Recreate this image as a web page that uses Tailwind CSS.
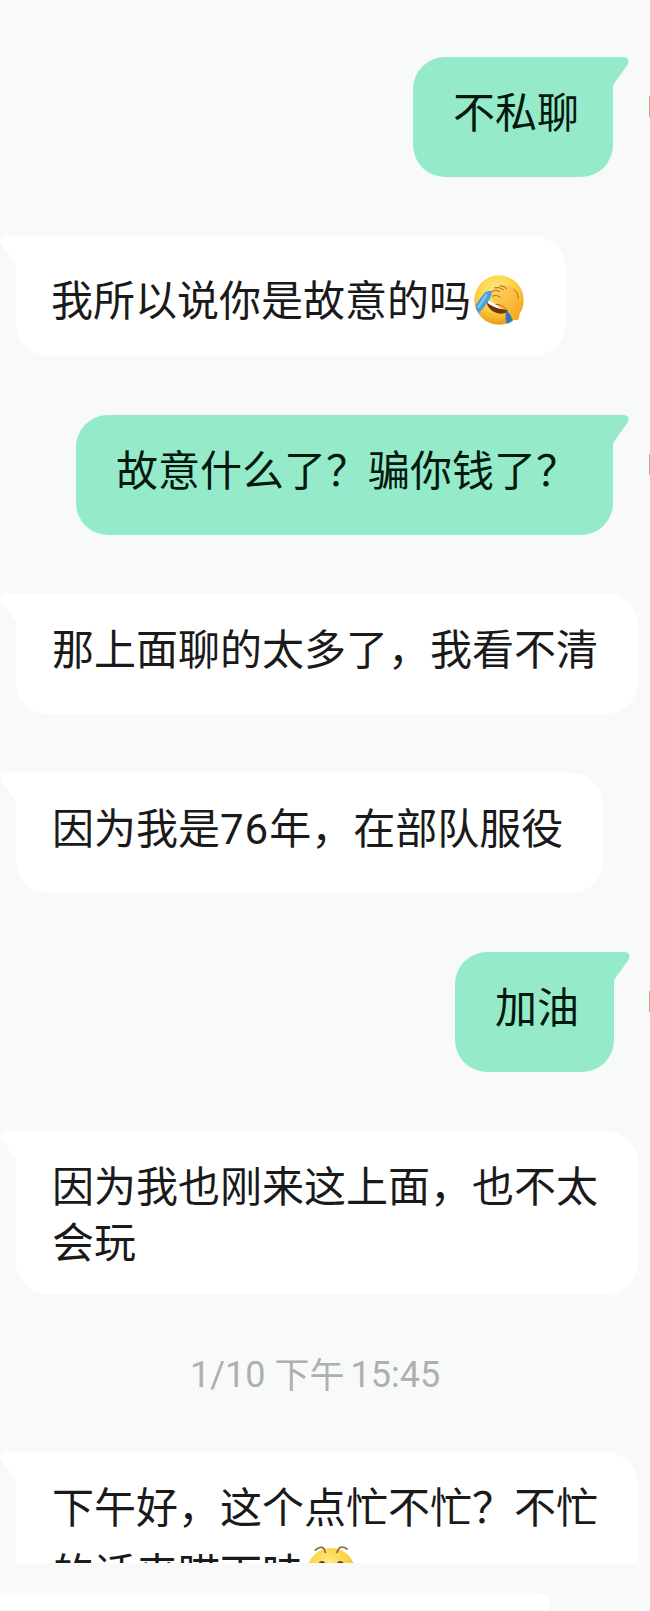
<!DOCTYPE html>
<html lang="zh-CN">
<head>
  <meta charset="UTF-8" />
  <meta name="viewport" content="width=device-width, initial-scale=1" />
  <title>聊天</title>
  <script src="https://cdn.jsdelivr.net/npm/@tailwindcss/browser@4"></script>
</head>
<body class="bg-[#f7faf9] w-[650px] h-[1611px] overflow-hidden text-[42px] leading-[56px] text-[#1a1a1a] font-['Noto_Sans_CJK_SC',sans-serif]">
  <!-- shared bubble tail, mirrored for incoming messages -->
  <svg class="hidden">
    <symbol id="tail" viewBox="0 0 16 30">
      <path d="M0 0H10C15 0 17 3.5 14.4 8L1.5 26Q0 28 0 30Z" fill="currentColor" />
    </symbol>
  </svg>

  <main class="h-[1563px] overflow-hidden flex flex-col pt-[57px] gap-[59px] whitespace-nowrap">
    <div class="relative shrink-0 self-end mr-[37px] w-[200px] h-[120px] pl-10 pt-[25px] bg-[#95ebc9] rounded-[32px] rounded-tr-none text-[#03190f]">
      不私聊
      <svg class="absolute top-0 left-full w-4 h-[30px] text-[#95ebc9]"><use href="#tail" /></svg>
      <span class="absolute top-[39px] -right-[37px] w-px h-[21px] bg-[#d9a47e]"></span>
    </div>

    <div class="relative shrink-0 ml-4 w-[550px] h-[120px] pl-[35px] pt-[5px] bg-white rounded-[32px] rounded-tl-none flex items-center">
      <span class="-mt-px">我所以说你是故意的吗</span>
      <svg class="ml-[3px] mt-[3px] size-[50px]" viewBox="0 0 150 150">
        <defs>
          <radialGradient id="face" cx="45%" cy="32%" r="68%">
            <stop offset="0" stop-color="#ffeb83" />
            <stop offset=".6" stop-color="#fdd03f" />
            <stop offset="1" stop-color="#eb9a17" />
          </radialGradient>
          <linearGradient id="hand" x1="0" y1="0" x2="1" y2="1">
            <stop offset="0" stop-color="#ffd869" />
            <stop offset="1" stop-color="#f5a51d" />
          </linearGradient>
        </defs>
        <circle cx="75" cy="75" r="74" fill="url(#face)" />
        <path d="M40 76Q65 90 94 98L103 108Q90 120 68 114Q46 105 40 90Z" fill="#74330f" />
        <path d="M42 76Q65 89 90 95L88 103Q58 99 42 85Z" fill="#fff" />
        <path d="M33 52Q48 44 55 50Q54 62 45 76Q32 97 14 115Q5 103 4 92Q15 74 33 52Z" fill="#4ba0dc" />
        <path d="M38 57Q28 77 12 98" fill="none" stroke="#83c7ef" stroke-width="7" />
        <path d="M96 105L116 125V137Q107 144 97 146Q93 127 96 105Z" fill="#3479b2" />
        <path d="M53 53Q53 38 69 35Q85 27 102 32Q122 36 130 58L141 88Q139 115 133 134Q123 137 114 132Q110 118 101 105Q78 105 66 88Q57 84 53 73Z" fill="url(#hand)" />
        <path d="M54 49Q65 41 77 49M62 38Q77 35 88 44M78 32Q91 32 98 41M56 63Q68 57 78 66M66 88Q83 87 98 104M120 42Q132 52 134 68" fill="none" stroke="#a9681b" stroke-width="3" stroke-linecap="round" />
      </svg>
      <svg class="absolute top-0 right-full w-4 h-[30px] text-white -scale-x-100"><use href="#tail" /></svg>
    </div>

    <div class="relative shrink-0 self-end mr-[37px] w-[537px] h-[120px] pl-10 pt-[25px] bg-[#95ebc9] rounded-[32px] rounded-tr-none text-[#03190f]">
      故意什么了？骗你钱了？
      <svg class="absolute top-0 left-full w-4 h-[30px] text-[#95ebc9]"><use href="#tail" /></svg>
      <span class="absolute top-[39px] -right-[37px] w-px h-[21px] bg-[#d9a47e]"></span>
    </div>

    <div class="relative shrink-0 ml-4 w-[622px] h-[120px] pl-9 pt-[25px] bg-white rounded-[32px] rounded-tl-none">
      那上面聊的太多了，我看不清
      <svg class="absolute top-0 right-full w-4 h-[30px] text-white -scale-x-100"><use href="#tail" /></svg>
    </div>

    <div class="relative shrink-0 ml-4 w-[587px] h-[120px] pl-9 pt-[25px] bg-white rounded-[32px] rounded-tl-none">
      因为我是<span class="font-[Roboto] tracking-[1px]">76</span>年，在部队服役
      <svg class="absolute top-0 right-full w-4 h-[30px] text-white -scale-x-100"><use href="#tail" /></svg>
    </div>

    <div class="relative shrink-0 self-end mr-9 w-[159px] h-[120px] pl-10 pt-[25px] bg-[#95ebc9] rounded-[32px] rounded-tr-none text-[#03190f]">
      加油
      <svg class="absolute top-0 left-full w-4 h-[30px] text-[#95ebc9]"><use href="#tail" /></svg>
      <span class="absolute top-[39px] -right-9 w-px h-[21px] bg-[#d9a47e]"></span>
    </div>

    <div class="relative shrink-0 ml-4 w-[622px] h-[163px] pl-9 pt-[25px] bg-white rounded-[32px] rounded-tl-none">
      因为我也刚来这上面，也不太<br />会玩
      <svg class="absolute top-0 right-full w-4 h-[30px] text-white -scale-x-100"><use href="#tail" /></svg>
    </div>

    <div class="shrink-0 h-10 pl-[190px] flex text-[35px] leading-10 text-[#aeb0af]">
      <span class="mt-0.5 font-[Roboto] text-[36px]">1/10</span>
      <span class="ml-[9px]">下午</span>
      <span class="mt-0.5 ml-1.5 font-[Roboto] text-[36px]">15:45</span>
    </div>

    <div class="relative shrink-0 ml-4 w-[622px] h-[190px] pl-9 pt-[25px] bg-white rounded-[32px] rounded-tl-none">
      <p>下午好，这个点忙不忙？不忙</p>
      <p class="flex mt-2.5">
        <span>的话来瞄下哇</span>
        <svg class="ml-0.5 mt-[3px] size-[50px]" viewBox="0 0 150 150">
          <circle cx="75" cy="78" r="72" fill="url(#face)" />
          <path d="M28 12Q52-7 58 19M93 19Q101-7 123 9" fill="none" stroke="#8a6740" stroke-width="5" stroke-linecap="round" />
          <circle cx="48" cy="55" r="10" fill="#64401d" />
          <circle cx="103" cy="55" r="10" fill="#64401d" />
          <path d="M50 101Q76 121 102 101" fill="none" stroke="#64401d" stroke-width="6" />
        </svg>
      </p>
      <svg class="absolute top-0 right-full w-4 h-[30px] text-white -scale-x-100"><use href="#tail" /></svg>
    </div>
  </main>

  <!-- message input -->
  <footer class="pt-[30px]">
    <div class="w-[549px] h-[18px] bg-white rounded-tr-lg"></div>
  </footer>
</body>
</html>
